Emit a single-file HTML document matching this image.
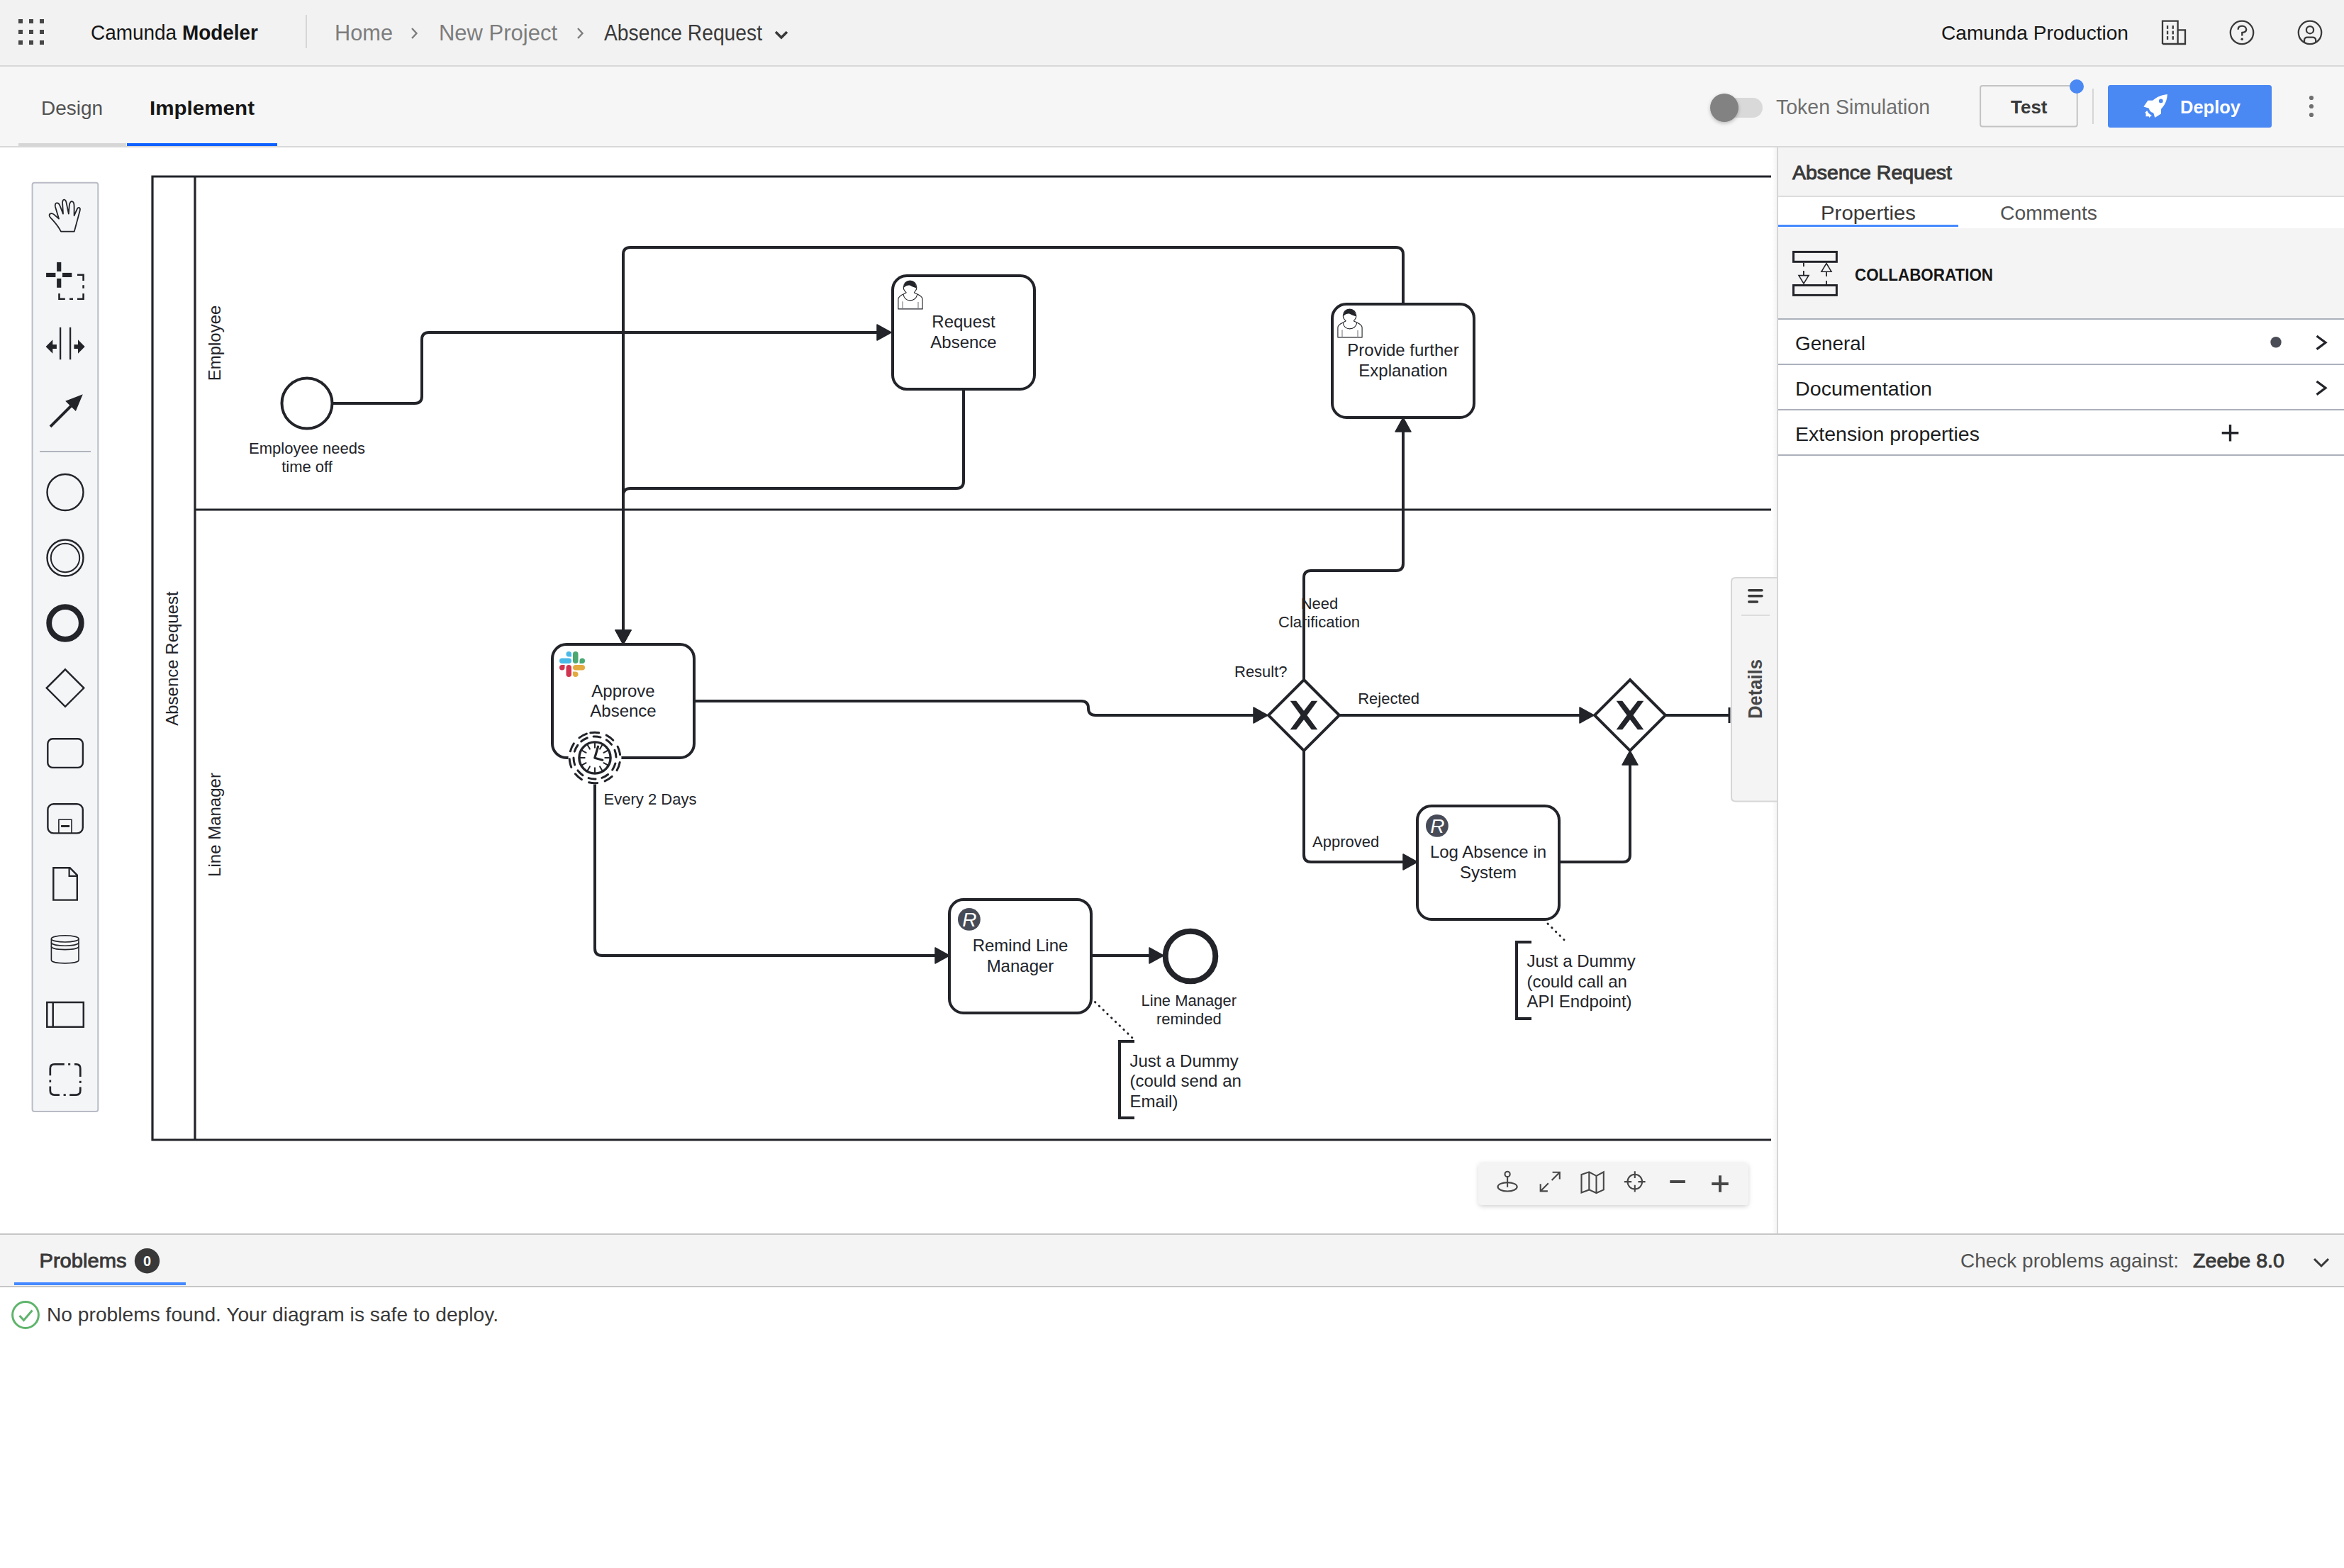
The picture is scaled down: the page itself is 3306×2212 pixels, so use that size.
<!DOCTYPE html>
<html><head><meta charset="utf-8"><title>Camunda Modeler</title>
<style>
html,body{margin:0;padding:0;width:3306px;height:2212px;overflow:hidden;background:#fff}
svg{position:absolute;left:0;top:0;display:block}
text{font-family:"Liberation Sans",sans-serif}
</style></head><body>
<svg width="3306" height="2212" viewBox="0 0 3306 2212">
<defs>
<filter id="sh" x="-10%" y="-30%" width="120%" height="170%"><feDropShadow dx="0" dy="2" stdDeviation="3" flood-color="#000" flood-opacity="0.18"/></filter>
<filter id="kshadow" x="-50%" y="-50%" width="200%" height="200%"><feDropShadow dx="0" dy="2" stdDeviation="2.5" flood-color="#000" flood-opacity="0.25"/></filter>
<linearGradient id="pshade" x1="0" x2="1" y1="0" y2="0"><stop offset="0" stop-color="#000" stop-opacity="0"/><stop offset="1" stop-color="#000" stop-opacity="0.04"/></linearGradient>
</defs>
<!-- ===== BACKGROUNDS ===== -->
<rect x="0" y="0" width="3306" height="92" fill="#f2f2f2"/>
<rect x="0" y="92" width="3306" height="2" fill="#d8d8d8"/>
<rect x="0" y="94" width="3306" height="112" fill="#f6f6f6"/>
<rect x="0" y="206" width="3306" height="2" fill="#d8d8d8"/>
<rect x="0" y="208" width="2506" height="1532" fill="#ffffff"/>
<g id="diagram">
<g fill="none" stroke="#22242a" stroke-width="3.2">
<path d="M2498 249 H215 V1608 H2498"/>
<path d="M275 249 V1608"/>
<path d="M275 719 H2498"/>
</g>
<text transform="translate(251.3 929) rotate(-90)" font-size="24" fill="#22242a" text-anchor="middle">Absence Request</text>
<text transform="translate(310.6 484) rotate(-90)" font-size="24" fill="#22242a" text-anchor="middle">Employee</text>
<text transform="translate(311.3 1163.5) rotate(-90)" font-size="24" fill="#22242a" text-anchor="middle">Line Manager</text>
<path d="M470.0 569.0 L585.0 569.0 Q595.0 569.0 595.0 559.0 L595.0 479.0 Q595.0 469.0 605.0 469.0 L1239.0 469.0" fill="none" stroke="#22242a" stroke-width="4"/>
<path d="M1257.0 469.0 L1237.0 480.0 L1237.0 458.0 Z" fill="#22242a" stroke="#22242a" stroke-width="1.5" stroke-linejoin="round"/>
<path d="M1359.0 549.0 L1359.0 679.0 Q1359.0 689.0 1349.0 689.0 L889.0 689.0 Q879.0 689.0 879.0 699.0 L879.0 891.0" fill="none" stroke="#22242a" stroke-width="4"/>
<path d="M879.0 909.0 L868.0 889.0 L890.0 889.0 Z" fill="#22242a" stroke="#22242a" stroke-width="1.5" stroke-linejoin="round"/>
<path d="M1979.0 429.0 L1979.0 359.0 Q1979.0 349.0 1969.0 349.0 L889.0 349.0 Q879.0 349.0 879.0 359.0 L879.0 891.0" fill="none" stroke="#22242a" stroke-width="4"/>
<path d="M879.0 909.0 L868.0 889.0 L890.0 889.0 Z" fill="#22242a" stroke="#22242a" stroke-width="1.5" stroke-linejoin="round"/>
<path d="M979.0 989.0 L1525.0 989.0 Q1535.0 989.0 1535.0 999.0 L1535.0 999.0 Q1535.0 1009.0 1545.0 1009.0 L1770.0 1009.0" fill="none" stroke="#22242a" stroke-width="4"/>
<path d="M1788.0 1009.0 L1768.0 1020.0 L1768.0 998.0 Z" fill="#22242a" stroke="#22242a" stroke-width="1.5" stroke-linejoin="round"/>
<path d="M1839.0 959.0 L1839.0 815.0 Q1839.0 805.0 1849.0 805.0 L1969.0 805.0 Q1979.0 805.0 1979.0 795.0 L1979.0 607.0" fill="none" stroke="#22242a" stroke-width="4"/>
<path d="M1979.0 589.0 L1990.0 609.0 L1968.0 609.0 Z" fill="#22242a" stroke="#22242a" stroke-width="1.5" stroke-linejoin="round"/>
<path d="M1889.0 1009.0 L2230.0 1009.0" fill="none" stroke="#22242a" stroke-width="4"/>
<path d="M2248.0 1009.0 L2228.0 1020.0 L2228.0 998.0 Z" fill="#22242a" stroke="#22242a" stroke-width="1.5" stroke-linejoin="round"/>
<path d="M2349.0 1009.0 L2439.0 1009.0" fill="none" stroke="#22242a" stroke-width="4"/>
<path d="M2439 998 V1020" stroke="#22242a" stroke-width="3"/>
<path d="M1839.0 1059.0 L1839.0 1206.0 Q1839.0 1216.0 1849.0 1216.0 L1981.0 1216.0" fill="none" stroke="#22242a" stroke-width="4"/>
<path d="M1999.0 1216.0 L1979.0 1227.0 L1979.0 1205.0 Z" fill="#22242a" stroke="#22242a" stroke-width="1.5" stroke-linejoin="round"/>
<path d="M2199.0 1216.0 L2289.0 1216.0 Q2299.0 1216.0 2299.0 1206.0 L2299.0 1077.0" fill="none" stroke="#22242a" stroke-width="4"/>
<path d="M2299.0 1059.0 L2310.0 1079.0 L2288.0 1079.0 Z" fill="#22242a" stroke="#22242a" stroke-width="1.5" stroke-linejoin="round"/>
<path d="M839.0 1105.0 L839.0 1338.0 Q839.0 1348.0 849.0 1348.0 L1321.0 1348.0" fill="none" stroke="#22242a" stroke-width="4"/>
<path d="M1339.0 1348.0 L1319.0 1359.0 L1319.0 1337.0 Z" fill="#22242a" stroke="#22242a" stroke-width="1.5" stroke-linejoin="round"/>
<path d="M1539.0 1348.0 L1623.0 1348.0" fill="none" stroke="#22242a" stroke-width="4"/>
<path d="M1641.0 1348.0 L1621.0 1359.0 L1621.0 1337.0 Z" fill="#22242a" stroke="#22242a" stroke-width="1.5" stroke-linejoin="round"/>
<circle cx="433" cy="569" r="35.5" fill="#fff" stroke="#22242a" stroke-width="4"/>
<text x="433.0" y="640.0" font-size="22" fill="#22242a" text-anchor="middle">Employee needs</text>
<text x="433.0" y="665.5" font-size="22" fill="#22242a" text-anchor="middle">time off</text>
<rect x="1259" y="389" width="200" height="160" rx="20" ry="20" fill="#fff" stroke="#22242a" stroke-width="4"/>
<text x="1359.0" y="462.0" font-size="24" fill="#22242a" text-anchor="middle">Request</text>
<text x="1359.0" y="490.6" font-size="24" fill="#22242a" text-anchor="middle">Absence</text>
<rect x="1879" y="429" width="200" height="160" rx="20" ry="20" fill="#fff" stroke="#22242a" stroke-width="4"/>
<text x="1979.0" y="502.0" font-size="24" fill="#22242a" text-anchor="middle">Provide further</text>
<text x="1979.0" y="530.6" font-size="24" fill="#22242a" text-anchor="middle">Explanation</text>
<rect x="779" y="909" width="200" height="160" rx="20" ry="20" fill="#fff" stroke="#22242a" stroke-width="4"/>
<text x="879.0" y="982.6" font-size="24" fill="#22242a" text-anchor="middle">Approve</text>
<text x="879.0" y="1011.2" font-size="24" fill="#22242a" text-anchor="middle">Absence</text>
<rect x="1339" y="1269" width="200" height="160" rx="20" ry="20" fill="#fff" stroke="#22242a" stroke-width="4"/>
<text x="1439.0" y="1342.0" font-size="24" fill="#22242a" text-anchor="middle">Remind Line</text>
<text x="1439.0" y="1370.6" font-size="24" fill="#22242a" text-anchor="middle">Manager</text>
<rect x="1999" y="1137" width="200" height="160" rx="20" ry="20" fill="#fff" stroke="#22242a" stroke-width="4"/>
<text x="2099.0" y="1210.0" font-size="24" fill="#22242a" text-anchor="middle">Log Absence in</text>
<text x="2099.0" y="1238.6" font-size="24" fill="#22242a" text-anchor="middle">System</text>
<g transform="translate(1259.0 389.0)" stroke="#22242a" stroke-width="1.1" fill="none" stroke-linejoin="round"><path d="M19.3 23.8 C16.6 21.6 15.3 19.4 15.3 16.6 C15.3 11 19.4 7.1 24.5 7.1 C29.6 7.1 33.8 11 33.8 16.6 C33.8 19.4 32.6 21.6 30.1 23.8"/><path d="M19.3 23.8 L15.1 26 C10.6 28.2 7.9 30.4 7.9 33 V46.9 H42.1 V33 C42.1 30.4 39.4 28.2 34.9 26 L30.1 23.8" /><path d="M15.1 26.2 C15.8 31.6 19.8 34.9 24.6 34.9 C29.5 34.9 33.6 31.6 34.9 26.2"/><path d="M14 36.2 V46.9 M36 37.1 V46.9" stroke="#777a80"/><path d="M15.5 16.9 C16.4 10.6 20 7.1 24.4 7.1 C29 7.1 32.6 10.6 33.7 17.2 C30.8 16.6 28.4 15.6 25.2 13.9 C22.2 12.8 19.2 13.6 15.5 16.9 Z" fill="#22242a" stroke="none"/></g>
<g transform="translate(1879.0 429.0)" stroke="#22242a" stroke-width="1.1" fill="none" stroke-linejoin="round"><path d="M19.3 23.8 C16.6 21.6 15.3 19.4 15.3 16.6 C15.3 11 19.4 7.1 24.5 7.1 C29.6 7.1 33.8 11 33.8 16.6 C33.8 19.4 32.6 21.6 30.1 23.8"/><path d="M19.3 23.8 L15.1 26 C10.6 28.2 7.9 30.4 7.9 33 V46.9 H42.1 V33 C42.1 30.4 39.4 28.2 34.9 26 L30.1 23.8" /><path d="M15.1 26.2 C15.8 31.6 19.8 34.9 24.6 34.9 C29.5 34.9 33.6 31.6 34.9 26.2"/><path d="M14 36.2 V46.9 M36 37.1 V46.9" stroke="#777a80"/><path d="M15.5 16.9 C16.4 10.6 20 7.1 24.4 7.1 C29 7.1 32.6 10.6 33.7 17.2 C30.8 16.6 28.4 15.6 25.2 13.9 C22.2 12.8 19.2 13.6 15.5 16.9 Z" fill="#22242a" stroke="none"/></g>
<circle cx="1366.9" cy="1296.9" r="15.9" fill="#474b57"/>
<text x="1367.4" y="1307.1" font-size="28" font-style="italic" fill="#fff" text-anchor="middle">R</text>
<circle cx="2026.9" cy="1164.9" r="15.9" fill="#474b57"/>
<text x="2027.4" y="1175.1" font-size="28" font-style="italic" fill="#fff" text-anchor="middle">R</text>
<g>
<rect x="789" y="928.5" width="17" height="7.5" rx="3.75" fill="#4ab9e8"/>
<path d="M806 926.5 H802.25 A3.75 3.75 0 1 1 806 922.75 Z" fill="#4ab9e8"/>
<rect x="808" y="919" width="7.5" height="17" rx="3.75" fill="#4aa872"/>
<path d="M817.5 936 V932.25 A3.75 3.75 0 1 1 821.25 936 Z" fill="#4aa872"/>
<path d="M796.5 938 V941.75 A3.75 3.75 0 1 1 792.75 938 Z" fill="#d1344f"/>
<rect x="798.5" y="938" width="7.5" height="17" rx="3.75" fill="#d1344f"/>
<rect x="808" y="938" width="17" height="7.5" rx="3.75" fill="#e3aa40"/>
<path d="M808 947.5 H811.75 A3.75 3.75 0 1 1 808 951.25 Z" fill="#e3aa40"/>
</g>
<circle cx="839" cy="1069" r="37.5" fill="#fff"/>
<circle cx="839" cy="1069" r="35.8" fill="none" stroke="#22242a" stroke-width="3" stroke-dasharray="12 11" stroke-linecap="round" transform="rotate(-100 839 1069)"/>
<circle cx="839" cy="1069" r="30" fill="none" stroke="#22242a" stroke-width="3" stroke-dasharray="10 9" stroke-linecap="round" transform="rotate(-130 839 1069)"/>
<circle cx="839" cy="1069" r="22.1" fill="#fff" stroke="#22242a" stroke-width="3.4"/>
<path d="M839.0 1054.7 L839.0 1048.5 M846.1 1056.6 L849.2 1051.2 M851.4 1061.8 L856.8 1058.8 M853.3 1069.0 L859.5 1069.0 M851.4 1076.2 L856.8 1079.2 M846.1 1081.4 L849.2 1086.8 M839.0 1083.3 L839.0 1089.5 M831.9 1081.4 L828.8 1086.8 M826.6 1076.2 L821.2 1079.2 M824.7 1069.0 L818.5 1069.0 M826.6 1061.8 L821.2 1058.8 M831.9 1056.6 L828.8 1051.2 " stroke="#22242a" stroke-width="2" stroke-linecap="round"/>
<path d="M843.5 1053.2 L838.8 1069.3 L849.8 1072.2" fill="none" stroke="#22242a" stroke-width="3.2" stroke-linecap="round" stroke-linejoin="round"/>
<text x="851.6" y="1134.7" font-size="22" fill="#22242a">Every 2 Days</text>
<circle cx="1679" cy="1349" r="35.3" fill="#fff" stroke="#22242a" stroke-width="8"/>
<text x="1676.8" y="1419.0" font-size="22" fill="#22242a" text-anchor="middle">Line Manager</text>
<text x="1676.8" y="1444.7" font-size="22" fill="#22242a" text-anchor="middle">reminded</text>
<path d="M1839 959 L1889 1009 L1839 1059 L1789 1009 Z" fill="#fff" stroke="#22242a" stroke-width="4" stroke-linejoin="miter"/>
<path d="M1819.7 988.8 L1828.2 988.8 L1839.0 1002.8 L1849.8 988.8 L1858.3 988.8 L1843.5 1009.0 L1858.3 1029.2 L1849.8 1029.2 L1839.0 1015.2 L1828.2 1029.2 L1819.7 1029.2 L1834.5 1009.0 Z" fill="#22242a"/>
<path d="M2299 959 L2349 1009 L2299 1059 L2249 1009 Z" fill="#fff" stroke="#22242a" stroke-width="4" stroke-linejoin="miter"/>
<path d="M2279.7 988.8 L2288.2 988.8 L2299.0 1002.8 L2309.8 988.8 L2318.3 988.8 L2303.5 1009.0 L2318.3 1029.2 L2309.8 1029.2 L2299.0 1015.2 L2288.2 1029.2 L2279.7 1029.2 L2294.5 1009.0 Z" fill="#22242a"/>
<text x="1861" y="859" font-size="22" fill="#22242a" text-anchor="middle">Need</text>
<text x="1860.5" y="885" font-size="22" fill="#22242a" text-anchor="middle">Clarification</text>
<text x="1741" y="955" font-size="22" fill="#22242a">Result?</text>
<text x="1915.2" y="992.6" font-size="22" fill="#22242a">Rejected</text>
<text x="1851" y="1194.6" font-size="22" fill="#22242a">Approved</text>
<path d="M1544.5 1413.6 L1597.8 1464.8" stroke="#22242a" stroke-width="3" stroke-dasharray="0.5 7.5" stroke-linecap="round"/>
<path d="M1600 1469 H1579 V1577 H1600" fill="none" stroke="#22242a" stroke-width="4"/>
<text x="1593.4" y="1505.0" font-size="24" fill="#22242a" text-anchor="start">Just a Dummy</text>
<text x="1593.4" y="1533.3" font-size="24" fill="#22242a" text-anchor="start">(could send an</text>
<text x="1593.4" y="1561.6" font-size="24" fill="#22242a" text-anchor="start">Email)</text>
<path d="M2183 1303 L2206 1325.7" stroke="#22242a" stroke-width="3" stroke-dasharray="0.5 7.5" stroke-linecap="round"/>
<path d="M2160 1329 H2139 V1437 H2160" fill="none" stroke="#22242a" stroke-width="4"/>
<text x="2153.5" y="1364.0" font-size="24" fill="#22242a" text-anchor="start">Just a Dummy</text>
<text x="2153.5" y="1392.5" font-size="24" fill="#22242a" text-anchor="start">(could call an</text>
<text x="2153.5" y="1421.0" font-size="24" fill="#22242a" text-anchor="start">API Endpoint)</text>
</g>
<g id="overlay">
<rect x="2499" y="208" width="7" height="1532" fill="url(#pshade)"/>
<rect x="45.6" y="257.7" width="92.7" height="1310.3" rx="3" fill="#f4f5f7" stroke="#b9bcc6" stroke-width="2"/>
<g fill="none" stroke="#22242a"><path d="M86 326.6 H104.8 L112.6 297.4 C114 292.6 110.6 291.6 108.8 294.8 L104.6 304.2 V291.2 C104.6 282 98.8 281.8 97.8 289.6 L96.8 301.6 L93.8 287 C92.6 279.6 87.2 279.8 88.2 288 L89 301.6 L84.4 290 C82.2 284.4 76.4 285.6 78 291.8 L83 308.6 L76.2 302.6 C72.2 299.4 67.4 302 70.6 306.2 C74.2 310.6 80.4 315.8 86 326.6 Z" stroke-width="1.8" stroke-linejoin="round"/></g>
<g fill="#22242a"><rect x="80.1" y="369.9" width="6.2" height="13"/><rect x="80.1" y="392.9" width="6.2" height="12.9"/><rect x="65.1" y="384.9" width="13.3" height="6.1"/><rect x="88" y="384.9" width="13.3" height="6.1"/></g>
<path d="M109 387.8 H117.6 V396 M117.6 402.2 V406.8 M117.6 414 V421.8 H109 M103 421.8 H98 M91.8 421.8 H83.5 V414" fill="none" stroke="#22242a" stroke-width="2.6"/>
<path d="M85.1 461.7 V507.3 M99.1 461.7 V507.3" stroke="#22242a" stroke-width="2.3"/>
<path d="M64.6 489 L74.3 479.3 V485.9 H79.9 V492 H74.3 V498.7 Z M119.7 489 L110 479.3 V485.9 H104.4 V492 H110 V498.7 Z" fill="#22242a"/>
<path d="M116.8 556.2 L92.2 565.7 L98.3 571.8 L69.6 600.5 L72.4 603.3 L101.2 574.6 L106.9 580.1 Z" fill="#22242a"/>
<rect x="56" y="636" width="72" height="2" fill="#b0b4be"/>
<circle cx="92" cy="694.5" r="25.5" fill="none" stroke="#22242a" stroke-width="2.4"/>
<circle cx="92" cy="787" r="25.5" fill="none" stroke="#22242a" stroke-width="2.4"/>
<circle cx="92" cy="787" r="20.2" fill="none" stroke="#22242a" stroke-width="2"/>
<circle cx="92" cy="879" r="22.8" fill="none" stroke="#22242a" stroke-width="7.8"/>
<path d="M92 944.3 L118.3 970.6 L92 996.9 L65.7 970.6 Z" fill="none" stroke="#22242a" stroke-width="2.4"/>
<rect x="67.3" y="1042.3" width="49.6" height="40.6" rx="7" fill="none" stroke="#22242a" stroke-width="2.4"/>
<rect x="67.4" y="1134.2" width="49.4" height="41.2" rx="8" fill="none" stroke="#22242a" stroke-width="2.4"/>
<path d="M82.9 1175.4 V1156.2 H101 V1175.4" fill="none" stroke="#22242a" stroke-width="1.6"/>
<rect x="86.1" y="1164" width="12" height="3" fill="#22242a"/>
<path d="M75.3 1224.2 H98.6 L108.8 1234.6 V1269.6 H75.3 Z" fill="none" stroke="#22242a" stroke-width="2.4"/>
<path d="M97.6 1224.2 V1235.8 H108.8" fill="none" stroke="#22242a" stroke-width="2.2"/>
<g fill="none" stroke="#22242a" stroke-width="1.6"><ellipse cx="91.7" cy="1324.4" rx="19.3" ry="4.6"/><path d="M72.4 1324.4 V1354.2 C72.4 1360.4 111 1360.4 111 1354.2 V1324.4"/><path d="M72.4 1329.6 C72.4 1335.8 111 1335.8 111 1329.6 M72.4 1335 C72.4 1341.2 111 1341.2 111 1335"/></g>
<rect x="66.3" y="1414" width="51.5" height="34.7" fill="none" stroke="#22242a" stroke-width="2.5"/>
<path d="M74.7 1414 V1448.7" stroke="#22242a" stroke-width="2.5"/>
<g fill="none" stroke="#22242a" stroke-width="2.7"><path d="M90.8 1501.4 H76.8 Q70.8 1501.4 70.8 1507.4 V1517.2"/><path d="M96.1 1501.4 H99.2"/><path d="M105 1501.4 H107.3 Q113.3 1501.4 113.3 1507.4 V1519"/><path d="M70.8 1523.6 V1526.8"/><path d="M113.3 1524.8 V1527.9"/><path d="M70.8 1532.4 V1538.6 Q70.8 1544.6 76.8 1544.6 H84"/><path d="M89.6 1544.6 H92.8"/><path d="M98.2 1544.6 H107.3 Q113.3 1544.6 113.3 1538.6 V1533.6"/></g>
<path d="M2508 815 H2448 Q2442 815 2442 821 V1124.5 Q2442 1130.5 2448 1130.5 H2508" fill="#f4f4f4" stroke="#d6d6d6" stroke-width="2"/>
<path d="M2466.8 832.8 H2485 M2466.8 840.8 H2485 M2466.8 849 H2478.4" stroke="#393939" stroke-width="3.6" stroke-linecap="round"/>
<rect x="2456" y="867" width="40" height="2" fill="#dcdcdc"/>
<text transform="translate(2485 972) rotate(-90)" font-size="27" font-weight="700" fill="#474747" text-anchor="middle" textLength="84" lengthAdjust="spacingAndGlyphs">Details</text>
<rect x="2085.5" y="1640" width="380.3" height="60" rx="5" fill="#f4f4f4" filter="url(#sh)"/>
<g fill="none" stroke="#474747" stroke-width="2.1"><circle cx="2126.1" cy="1656.4" r="3.6"/><path d="M2126.1 1660 V1674.8"/><ellipse cx="2126.1" cy="1674.3" rx="13.6" ry="6.2"/><path d="M2189.6 1653.8 H2199.8 V1663.5 M2199.8 1653.8 L2188.6 1665"/><path d="M2172.7 1670.2 V1680.4 H2182.9 M2172.7 1680.4 L2183.8 1669.3"/><path d="M2230.5 1656.9 L2241.3 1653.3 L2251.5 1658.9 L2261.8 1653.3 V1678.4 L2251.5 1683 L2241.3 1678.4 L2230.5 1682.5 Z M2241.3 1653.3 V1678.4 M2251.5 1658.9 V1683" stroke-linejoin="miter"/><circle cx="2305.8" cy="1667.1" r="10.3"/><path d="M2305.8 1652.3 V1662 M2305.8 1671.7 V1681.5 M2290.9 1667.1 H2301.2 M2310.4 1667.1 H2320.6"/></g>
<path d="M2355.3 1667.1 H2376.9 M2414.2 1670 H2437.8 M2426 1658.3 V1681.8" stroke="#474747" stroke-width="4"/>
</g>
<!-- ===== HEADER ===== -->
<g id="header">
<g fill="#474747">
<rect x="26" y="27" width="6" height="6"/><rect x="41" y="27" width="6" height="6"/><rect x="56" y="27" width="6" height="6"/>
<rect x="26" y="42" width="6" height="6"/><rect x="41" y="42" width="6" height="6"/><rect x="56" y="42" width="6" height="6"/>
<rect x="26" y="57" width="6" height="6"/><rect x="41" y="57" width="6" height="6"/><rect x="56" y="57" width="6" height="6"/>
</g>
<text x="128" y="55.5" font-size="29.5" fill="#161616" textLength="236" lengthAdjust="spacingAndGlyphs">Camunda <tspan font-weight="700">Modeler</tspan></text>
<rect x="431" y="21" width="2" height="47" fill="#d6d6d6"/>
<text x="472" y="57" font-size="30.7" fill="#7d7d7d" textLength="82" lengthAdjust="spacingAndGlyphs">Home</text>
<path d="M581 40 L587.5 47 L581 54" fill="none" stroke="#7d7d7d" stroke-width="2.4"/>
<text x="619" y="57" font-size="30.7" fill="#7d7d7d" textLength="167" lengthAdjust="spacingAndGlyphs">New Project</text>
<path d="M815 40 L821.5 47 L815 54" fill="none" stroke="#7d7d7d" stroke-width="2.4"/>
<text x="852" y="57" font-size="30.7" fill="#393939" textLength="223" lengthAdjust="spacingAndGlyphs">Absence Request</text>
<path d="M1094 45 L1102 53 L1110 45" fill="none" stroke="#393939" stroke-width="3.6"/>
<text x="2738" y="56" font-size="28.5" fill="#161616" textLength="264" lengthAdjust="spacingAndGlyphs">Camunda Production</text>
<g fill="none" stroke="#393939" stroke-width="2.3">
<path d="M3050 62 V29.6 H3071.6 V62 M3071.6 42.4 H3082 V62 H3050"/>
</g>
<g fill="#393939">
<rect x="3055.9" y="36" width="2.3" height="4.8"/><rect x="3063.6" y="36" width="2.3" height="4.8"/>
<rect x="3055.9" y="43.6" width="2.3" height="4.8"/><rect x="3063.6" y="43.6" width="2.3" height="4.8"/>
<rect x="3055.9" y="51.1" width="2.3" height="4.8"/><rect x="3063.6" y="51.1" width="2.3" height="4.8"/>
</g>
<circle cx="3162" cy="45.9" r="16.2" fill="none" stroke="#393939" stroke-width="2.3"/>
<path d="M3156.6 41.8 C3156.6 38.2 3159 36.6 3162.2 36.6 C3165.6 36.6 3168.2 38.8 3168.2 41.6 C3168.2 44.4 3165.6 45.8 3162.3 46 V50.6" fill="none" stroke="#393939" stroke-width="2.3"/>
<circle cx="3162.2" cy="55.2" r="1.8" fill="#393939"/>
<circle cx="3258" cy="45.9" r="16.2" fill="none" stroke="#393939" stroke-width="2.3"/>
<circle cx="3258" cy="42.2" r="5.1" fill="none" stroke="#393939" stroke-width="2.3"/>
<path d="M3250 59.5 V57 C3250 54 3252 52.6 3254.5 52.6 H3261.5 C3264 52.6 3266.2 54 3266.2 57 V59.5" fill="none" stroke="#393939" stroke-width="2.3"/>
</g>
<!-- ===== TABS ===== -->
<g id="tabs">
<text x="58" y="162" font-size="28.5" fill="#525252" textLength="87" lengthAdjust="spacingAndGlyphs">Design</text>
<text x="211" y="162" font-size="28.5" font-weight="700" fill="#161616" textLength="148" lengthAdjust="spacingAndGlyphs">Implement</text>
<rect x="26" y="202" width="152" height="4" fill="#d6d6d6"/>
<rect x="179" y="202" width="212" height="4" fill="#0f62fe"/>
<rect x="2426" y="138" width="60" height="28" rx="14" fill="#d9d9d9"/>
<circle cx="2432" cy="152" r="20" fill="#828282" filter="url(#kshadow)"/>
<text x="2505" y="161" font-size="30" fill="#6f6f6f" textLength="217" lengthAdjust="spacingAndGlyphs">Token Simulation</text>
<rect x="2793.1" y="121.1" width="136.6" height="57.5" rx="3" fill="#f6f6f6" stroke="#c3c3c3" stroke-width="2"/>
<text x="2836" y="160" font-size="25.5" font-weight="700" fill="#393939" textLength="51.5" lengthAdjust="spacingAndGlyphs">Test</text>
<circle cx="2929" cy="122" r="10" fill="#4a88f4"/>
<rect x="2951" y="125" width="2" height="50" fill="#d6d6d6"/>
<rect x="2973" y="120" width="231" height="60" rx="3.5" fill="#4a88f4"/>
<g transform="translate(3023,133)" fill="#ffffff">
<path d="M33.9 0 C27 0.6 19.6 3 13.1 8.7 L6.4 8.7 L0.4 17.5 L7.7 19.7 C8.6 22.2 9.8 25.4 14.1 26.1 L16.3 33.1 L24.9 27.4 L25.1 20.7 C29.8 15.6 33.4 9.6 33.9 0 Z"/>
<path d="M5.2 22.9 L2 26.3 L3.7 27.1 L3.4 31.2 L7.7 31.2 L8.4 33 L11.9 29.6 C9.2 28.4 6.8 26.6 5.2 22.9 Z"/>
<circle cx="24.8" cy="9.4" r="2.9" fill="#4a88f4"/>
</g>
<text x="3075" y="160.2" font-size="26" font-weight="700" fill="#ffffff" textLength="85" lengthAdjust="spacingAndGlyphs">Deploy</text>
<circle cx="3260" cy="138" r="3.1" fill="#6f6f6f"/><circle cx="3260" cy="150" r="3.1" fill="#6f6f6f"/><circle cx="3260" cy="162" r="3.1" fill="#6f6f6f"/>
</g>
<!-- ===== RIGHT PANEL ===== -->
<g id="panel">
<rect x="2506" y="208" width="2" height="1532" fill="#d6d6d6"/>
<rect x="2508" y="208" width="798" height="68" fill="#f4f4f4"/>
<rect x="2508" y="276" width="798" height="2" fill="#dcdcdc"/>
<rect x="2508" y="278" width="798" height="1462" fill="#ffffff"/>
<text x="2528" y="252.5" font-size="28.5" fill="#393939" stroke="#393939" stroke-width="1" textLength="225" lengthAdjust="spacingAndGlyphs">Absence Request</text>
<text x="2568" y="310" font-size="28" fill="#393939" textLength="134" lengthAdjust="spacingAndGlyphs">Properties</text>
<text x="2821" y="310" font-size="28" fill="#525252" textLength="137" lengthAdjust="spacingAndGlyphs">Comments</text>
<rect x="2508" y="317" width="254" height="3" fill="#4589ff"/>
<rect x="2508" y="322" width="798" height="127" fill="#f4f4f4"/>
<g fill="none" stroke="#22242a">
<rect x="2529.5" y="355.4" width="60.9" height="13.9" stroke-width="3"/>
<rect x="2529.5" y="402.5" width="60.9" height="13.9" stroke-width="3"/>
<path d="M2543.9 370.8 V376 M2543.9 382 V388.2 M2576 383.6 V390 M2576 396 V401" stroke-width="1.8"/>
<path d="M2537 388.6 H2551 L2544 400 Z M2569 383.2 H2583 L2576 371.6 Z" stroke-width="1.6"/>
</g>
<text x="2616" y="395.6" font-size="24.5" font-weight="700" fill="#161616" textLength="195" lengthAdjust="spacingAndGlyphs">COLLABORATION</text>
<rect x="2508" y="449" width="798" height="2" fill="#abb0bb"/>
<rect x="2508" y="513" width="798" height="2" fill="#abb0bb"/>
<rect x="2508" y="577" width="798" height="2" fill="#abb0bb"/>
<rect x="2508" y="641" width="798" height="2" fill="#abb0bb"/>
<text x="2532" y="494" font-size="27.3" fill="#1c1d21" textLength="99" lengthAdjust="spacingAndGlyphs">General</text>
<text x="2532" y="557.8" font-size="27.3" fill="#1c1d21" textLength="193" lengthAdjust="spacingAndGlyphs">Documentation</text>
<text x="2532" y="622" font-size="27.3" fill="#1c1d21" textLength="260" lengthAdjust="spacingAndGlyphs">Extension properties</text>
<circle cx="3210" cy="482.7" r="7.7" fill="#4a4d56"/>
<path d="M3267.5 474 L3280 483.3 L3267.5 492.6" fill="none" stroke="#22242a" stroke-width="3.2"/>
<path d="M3267.5 538 L3280 547.3 L3267.5 556.6" fill="none" stroke="#22242a" stroke-width="3.2"/>
<path d="M3145.5 599 V622.6 M3133.7 610.8 H3157.3" fill="none" stroke="#22242a" stroke-width="3.4"/>
</g>
<!-- ===== BOTTOM ===== -->
<g id="bottom">
<rect x="0" y="1740" width="3306" height="2" fill="#c6c6c6"/>
<rect x="0" y="1742" width="3306" height="72" fill="#f4f4f4"/>
<rect x="0" y="1814" width="3306" height="2" fill="#c6c6c6"/>
<rect x="0" y="1816" width="3306" height="396" fill="#ffffff"/>
<text x="55.5" y="1788.3" font-size="28.5" fill="#393939" stroke="#393939" stroke-width="0.9" textLength="123" lengthAdjust="spacingAndGlyphs">Problems</text>
<circle cx="207.5" cy="1778.7" r="17.7" fill="#393939"/>
<text x="207.5" y="1786.3" font-size="20" font-weight="700" fill="#ffffff" text-anchor="middle">0</text>
<rect x="20" y="1809" width="242" height="4" fill="#4589ff"/>
<circle cx="36" cy="1855" r="18.4" fill="none" stroke="#5fb46c" stroke-width="3"/>
<path d="M27.5 1856 L33.5 1862.5 L45.5 1848.5" fill="none" stroke="#5fb46c" stroke-width="3"/>
<text x="66" y="1864" font-size="28.5" fill="#393939" textLength="637" lengthAdjust="spacingAndGlyphs">No problems found. Your diagram is safe to deploy.</text>
<text x="2765" y="1787.7" font-size="28.5" fill="#525252" textLength="308" lengthAdjust="spacingAndGlyphs">Check problems against:</text>
<text x="3093" y="1787.7" font-size="28.5" fill="#393939" stroke="#393939" stroke-width="0.9" textLength="129" lengthAdjust="spacingAndGlyphs">Zeebe 8.0</text>
<path d="M3264 1776 L3274 1786 L3284 1776" fill="none" stroke="#393939" stroke-width="3"/>
</g>
</svg>
</body></html>
